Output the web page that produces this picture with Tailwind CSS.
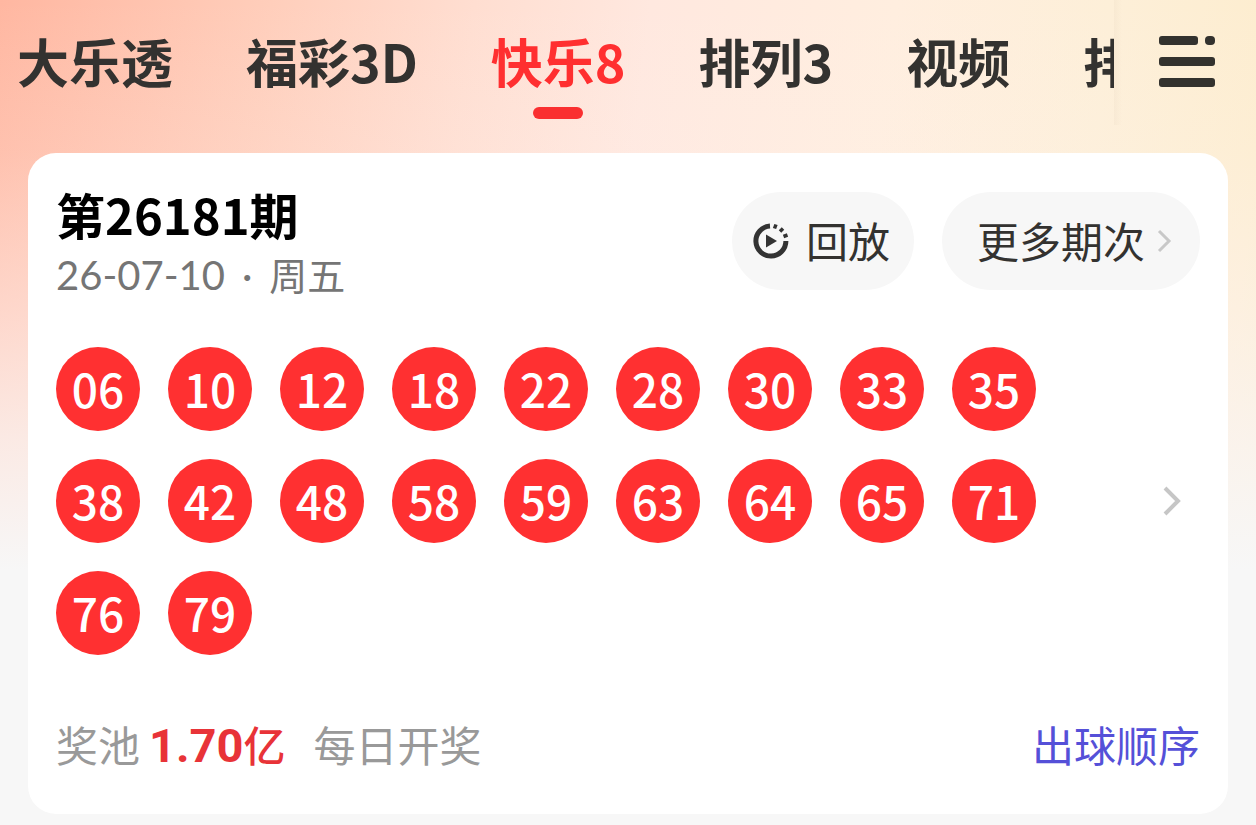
<!DOCTYPE html>
<html lang="zh-CN">
<head>
<meta charset="utf-8">
<meta name="viewport" content="width=device-width, initial-scale=1">
<title>快乐8</title>
<script src="https://cdn.jsdelivr.net/npm/@tailwindcss/browser@4"></script>
</head>
<body class="min-h-screen bg-[#f7f7f7] font-['Noto_Sans_CJK_SC',sans-serif] text-[#333230]">
<div class="min-h-screen bg-[linear-gradient(to_bottom,#fdf3f100_0px,#fdf3f126_150px,#fdf3f180_310px,#faf4f2d0_440px,#f7f7f7_570px),linear-gradient(97deg,#ffb7a1_0%,#ffcebb_20%,#ffded1_35%,#ffe8df_48%,#ffeedf_66%,#fdefd8_82%,#fdedcf_94%,#f7eec9_100%)] pb-[10px]">
  <header class="flex h-[153px] items-start">
    <nav class="flex min-w-0 flex-1 gap-[73px] overflow-hidden pl-[17px] text-[52px] leading-[76px] font-bold whitespace-nowrap" aria-label="彩种">
      <a href="#dlt" class="mt-[23px]">大乐透</a>
      <a href="#fc3d" class="mt-[23px]">福彩3D</a>
      <a href="#kl8" class="mt-[23px] flex flex-col items-center gap-2 text-[#ff2f30]" aria-current="page">快乐8<span class="h-3 w-[50px] rounded-full bg-[#fa2f30]"></span></a>
      <a href="#pl3" class="mt-[23px]">排列3</a>
      <a href="#sp" class="mt-[23px]">视频</a>
      <a href="#pl5" class="mt-[23px]">排</a>
    </nav>
    <div class="h-[125px] w-2 shrink-0 bg-linear-to-r from-[#8060400a] to-transparent"></div>
    <button type="button" class="mt-[34px] mr-10 ml-[36px] shrink-0" aria-label="菜单">
      <svg width="58" height="56" viewBox="0 0 58 56" fill="#33322e"><rect x="1" y="2" width="39" height="9" rx="3"/><rect x="47" y="2" width="10" height="9" rx="4"/><rect x="1" y="23" width="56" height="9" rx="3"/><rect x="1" y="44" width="56" height="9" rx="3"/></svg>
    </button>
  </header>

  <main class="mx-7 rounded-[28px] bg-white px-7 pt-8 pb-[38px]">
    <div class="flex items-start justify-between">
      <div>
        <h1 class="text-[49px] leading-[58px] font-bold text-black">第26181期</h1>
        <p class="flex gap-[17px] font-['Lato','Noto_Sans_CJK_SC',sans-serif] text-[40px] leading-[64px] text-[#757575]"><span>26-07-10</span><span>·</span><span class="text-[38px]">周五</span></p>
      </div>
      <div class="mt-[7px] flex gap-7 text-[42px] leading-[58px]">
        <button type="button" class="flex h-[98px] items-center gap-4 rounded-full bg-[#f7f7f7] pr-6 pl-5">
          <svg width="38" height="38" viewBox="0 0 38 38" fill="none" stroke="#333"><path d="M18 4.100A15 15 0 1 0 33.900 19" stroke-width="5"/><path d="M22.500 6.500L24 2.500M28 9.500L31 6.500M31.500 14.500L35.500 13" stroke-width="3.500"/><path d="M14 12.500V25.500L25 19Z" fill="#333" stroke="none"/></svg>
          <span class="pb-[3px]">回放</span>
        </button>
        <button type="button" class="flex h-[98px] items-center gap-3 rounded-full bg-[#f7f7f7] pr-7 pl-[35px]">
          <span class="pb-[3px]">更多期次</span>
          <svg width="15" height="24" viewBox="0 0 15 24" fill="none" stroke="#c8c8c8" stroke-width="3"><path d="M2 2L12 12L2 22"/></svg>
        </button>
      </div>
    </div>

    <div class="mt-10 flex items-center justify-between">
      <ul class="grid grid-cols-[repeat(9,84px)] gap-7 text-[46px] leading-[82px] font-medium text-white *:h-[84px] *:rounded-full *:bg-[#ff3031] *:text-center">
        <li>06</li><li>10</li><li>12</li><li>18</li><li>22</li><li>28</li><li>30</li><li>33</li><li>35</li>
        <li>38</li><li>42</li><li>48</li><li>58</li><li>59</li><li>63</li><li>64</li><li>65</li><li>71</li>
        <li>76</li><li>79</li>
      </ul>
      <a href="#detail" class="mr-[18px]" aria-label="开奖详情">
        <svg width="20" height="30" viewBox="0 0 20 30" fill="none" stroke="#c6c6c6" stroke-width="4"><path d="M3 2L16 15L3 28"/></svg>
      </a>
    </div>

    <div class="mt-[57px] flex items-center justify-between text-[42px] leading-[60px]">
      <p class="flex items-center text-[#999]">奖池<strong class="ml-[9px] flex items-center text-[#e83338]"><span class="pt-1 font-['Roboto',sans-serif] text-[47px] font-bold">1.70</span><span class="font-medium">亿</span></strong><span class="ml-[28px]">每日开奖</span></p>
      <a href="#order" class="text-[#5550d8]">出球顺序</a>
    </div>
  </main>
</div>
</body>
</html>
